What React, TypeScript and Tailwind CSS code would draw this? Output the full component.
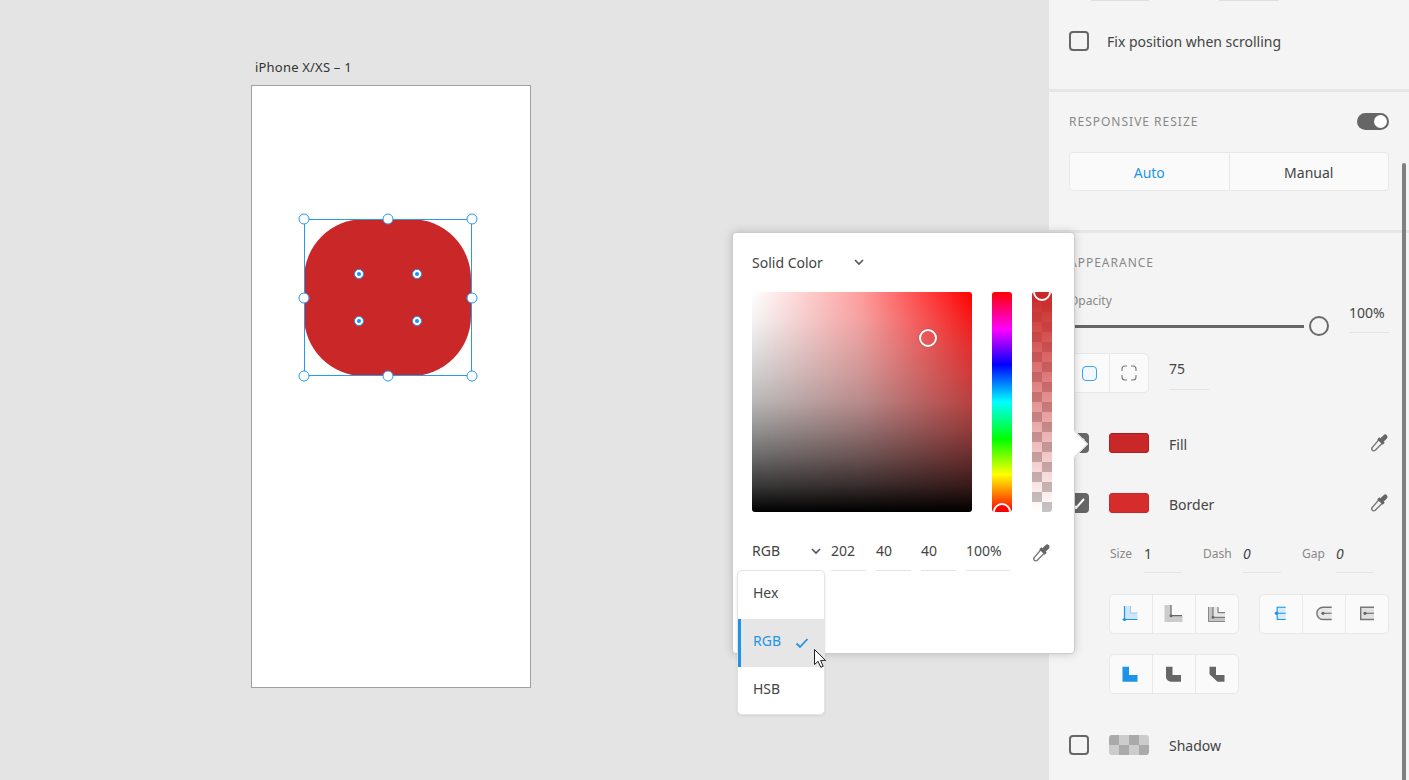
import React from "react";

const font = "[font-family:'Noto_Sans',sans-serif]";

function Dropper({ className = "" }: { className?: string }) {
  return (
    <svg viewBox="0 0 20 20" width="20" height="20" className={className} fill="none">
      <path d="M10 6.5l3.5 3.5-7 7c-.8.8-2.2 1.1-3.2.3-.8-1-.5-2.4.3-3.2z" stroke="#777" strokeWidth="1.4" />
      <path d="M9.3 5.3l5.4 5.4" stroke="#666" strokeWidth="3" />
      <path d="M13 7l3.2-3.2" stroke="#666" strokeWidth="4.6" strokeLinecap="round" />
    </svg>
  );
}

function Chevron({ className = "" }: { className?: string }) {
  return (
    <svg viewBox="0 0 12 12" width="12" height="12" className={className} fill="none">
      <path d="M2 4l4 4 4-4" stroke="#555" strokeWidth="1.6" />
    </svg>
  );
}

function Check({ on = false }: { on?: boolean }) {
  return (
    <div className={`flex h-5 w-5 shrink-0 items-center justify-center rounded-[4px] border-2 border-[#666] ${on ? "bg-[#666]" : ""}`}>
      {on && (
        <svg viewBox="0 0 16 16" width="16" height="16" fill="none">
          <path d="M2.5 10l2.5 3 8-9" stroke="#fff" strokeWidth="2" />
        </svg>
      )}
    </div>
  );
}

function Underlined({ value, className = "", italic = false }: { value: string; className?: string; italic?: boolean }) {
  return (
    <div className={`border-b border-[#e4e4e4] text-[14px] leading-[20px] text-[#444] ${italic ? "italic" : ""} ${className}`}>{value}</div>
  );
}

function Handle({ x, y }: { x: number; y: number }) {
  return (
    <div
      className="absolute h-[11px] w-[11px] -translate-x-1/2 -translate-y-1/2 rounded-full border-[1.5px] border-[#2a98ec] bg-white"
      style={{ left: x, top: y }}
    />
  );
}

function Radius({ x, y }: { x: number; y: number }) {
  return (
    <div
      className="absolute flex h-[10px] w-[10px] -translate-x-1/2 -translate-y-1/2 items-center justify-center rounded-full border-[1.5px] border-[#2a98ec] bg-white"
      style={{ left: x, top: y }}
    >
      <div className="h-1 w-1 rounded-full bg-[#1e94e8]" />
    </div>
  );
}

function Group({ children, className = "" }: { children: React.ReactNode; className?: string }) {
  return (
    <div className={`flex h-10 divide-x divide-[#e8e8e8] rounded-[5px] border border-[#e8e8e8] bg-[#fafafa] ${className}`}>{children}</div>
  );
}

function Cell({ children, className = "" }: { children: React.ReactNode; className?: string }) {
  return <div className={`flex flex-1 items-center justify-center ${className}`}>{children}</div>;
}

function Ico({ children }: { children: React.ReactNode }) {
  return (
    <svg viewBox="0 0 20 20" width="20" height="20" fill="none">
      {children}
    </svg>
  );
}

export default function App() {
  return (
    <div className={`relative flex h-[780px] w-[1409px] overflow-hidden bg-[#e4e4e4] ${font}`}>
      {/* Canvas */}
      <div className="relative flex-1">
        <div className="absolute left-[255px] top-[58px] text-[13px] leading-[18px] tracking-[0.2px] text-[#333]">iPhone X/XS – 1</div>
        <div className="absolute left-[251px] top-[85px] h-[603px] w-[280px] border border-[#a0a0a0] bg-white" />
        <div className="absolute left-[304px] top-[219px] h-[157px] w-[167px] rounded-[60px] bg-[#ca2828]" />
        <div className="absolute left-[304px] top-[219px] h-[157px] w-[168px] border border-[#2a98ec]" />
        <Handle x={304} y={219} />
        <Handle x={387.5} y={219} />
        <Handle x={471.5} y={219} />
        <Handle x={304} y={297.5} />
        <Handle x={471.5} y={297.5} />
        <Handle x={304} y={375.5} />
        <Handle x={387.5} y={375.5} />
        <Handle x={471.5} y={375.5} />
        <Radius x={359} y={274} />
        <Radius x={416.5} y={274} />
        <Radius x={359} y={320.5} />
        <Radius x={416.5} y={320.5} />
      </div>

      {/* Right panel */}
      <div className="relative flex w-[360px] shrink-0 flex-col bg-[#f4f4f4] text-[#444]">
        <div className="flex gap-[70px] pl-[42px]">
          <div className="h-px w-[58px] bg-[#e0e0e0]" />
          <div className="h-px w-[60px] bg-[#e0e0e0]" />
        </div>
        <div className="mt-[30px] flex h-5 items-center px-5">
          <Check />
          <span className="ml-[18px] text-[14px] text-[#444]">Fix position when scrolling</span>
        </div>
        <div className="mt-[38px] h-[3px] bg-[#e6e6e6]" />

        <div className="mt-[21px] flex h-[17px] items-center justify-between px-5">
          <span className="text-[12px] tracking-[1px] text-[#888]">RESPONSIVE RESIZE</span>
          <div className="flex h-[17px] w-8 items-center justify-end rounded-full bg-[#666] pr-[2px]">
            <div className="h-[13px] w-[13px] rounded-full bg-white" />
          </div>
        </div>
        <div className="mx-5 mt-[22px] flex h-[39px] divide-x divide-[#e8e8e8] rounded-[4px] border border-[#e8e8e8] bg-[#fafafa] text-[14px]">
          <Cell className="pt-[1px] text-[#1e94e8]">Auto</Cell>
          <Cell className="pt-[1px] text-[#444]">Manual</Cell>
        </div>
        <div className="mt-[39px] h-[3px] bg-[#e6e6e6]" />

        <div className="mt-[20px] flex h-[18px] items-center px-5 pt-[1px]">
          <span className="text-[12px] tracking-[1px] text-[#888]">APPEARANCE</span>
        </div>
        <div className="mt-[20px] flex px-5">
          <div className="flex-1">
            <div className="pt-[1px] text-[12px] leading-[17px] text-[#888]">Opacity</div>
            <div className="mt-[7px] flex h-5 items-center">
              <div className="h-[3px] w-[235px] bg-[#666]" />
              <div className="ml-[5px] h-5 w-5 rounded-full border-[2.5px] border-[#6a6a6a] bg-[#f4f4f4]" />
            </div>
          </div>
          <Underlined value="100%" className="mt-[12px] h-[30px] w-10 self-start" />
        </div>

        <div className="mt-[17px] flex items-start px-5">
          <Group className="w-20">
            <Cell>
              <div className="h-[15px] w-[15px] rounded-[4px] border-[1.5px] border-[#3aa0f0] bg-[#f2f9fe]" />
            </Cell>
            <Cell>
              <Ico>
                <path d="M3 8V6a3 3 0 0 1 3-3h2M12 3h2a3 3 0 0 1 3 3v2M17 12v2a3 3 0 0 1-3 3h-2M8 17H6a3 3 0 0 1-3-3v-2" stroke="#777" strokeWidth="1.1" />
              </Ico>
            </Cell>
          </Group>
          <Underlined value="75" className="ml-5 mt-[6px] h-[31px] w-10" />
        </div>

        <div className="mt-10 flex h-5 items-center px-5">
          <Check on />
          <div className="ml-5 h-5 w-10 rounded-[3px] border border-[#a82020] bg-[#ca2828]" />
          <span className="ml-5 flex-1 pt-[2px] text-[14px]">Fill</span>
          <Dropper />
        </div>
        <div className="mt-10 flex h-5 items-center px-5">
          <Check on />
          <div className="ml-5 h-5 w-10 rounded-[3px] border border-[#c42828] bg-[#d62c2c]" />
          <span className="ml-5 flex-1 pt-[2px] text-[14px]">Border</span>
          <Dropper />
        </div>

        <div className="mt-[30px] flex pl-[61px] text-[12px] leading-[20px] text-[#888]">
          <span className="w-[34px] pt-[1px]">Size</span>
          <Underlined value="1" className="h-[30px] w-[38px] pt-[1px]" />
          <span className="ml-[21px] w-[40px] pt-[1px]">Dash</span>
          <Underlined value="0" italic className="h-[30px] w-[38px] pt-[1px]" />
          <span className="ml-[21px] w-[34px] pt-[1px]">Gap</span>
          <Underlined value="0" italic className="h-[30px] w-[38px] pt-[1px]" />
        </div>

        <div className="mt-[21px] flex gap-5 pl-[60px] pr-5">
          <Group className="w-[130px]">
            <Cell>
              <Ico>
                <path d="M3.5 2h6v7h7v6.5H3.5z" fill="#cfe6f9" />
                <path d="M9.5 2v7h7" stroke="#9ccbf0" strokeWidth="1" />
                <path d="M3.5 2v14M1.5 15.5h15" stroke="#1e94e8" strokeWidth="1.2" />
                <circle cx="3.5" cy="15.5" r="1.6" fill="#1e94e8" />
              </Ico>
            </Cell>
            <Cell>
              <Ico>
                <path d="M.5 1H7v10.7h11.5V18H.5z" fill="#ccc" />
                <path d="M7 1v10.7h11" stroke="#666" strokeWidth="1.2" />
                <circle cx="7" cy="11.7" r="1.5" fill="#666" />
              </Ico>
            </Cell>
            <Cell>
              <Ico>
                <path d="M1 3h5v10.3h12V18H1z" fill="#c4c4c4" />
                <path d="M6 3h5v5.7h7v4.6H6z" fill="#e8e8e8" />
                <path d="M6 3v10.3h12M11 3v5.7h7" stroke="#666" strokeWidth="1" />
                <path d="M1.5 3v14.5H18" stroke="#888" strokeWidth="1" />
                <circle cx="6" cy="13.3" r="1.4" fill="#666" />
              </Ico>
            </Cell>
          </Group>
          <Group className="w-[130px]">
            <Cell>
              <Ico>
                <rect x="5.7" y="2.7" width="9" height="13.3" fill="#d6ebfb" />
                <path d="M14.7 3.2H6.2v12.3h8.5M5 9.3h9.7" stroke="#1e94e8" strokeWidth="1.1" />
                <circle cx="5.5" cy="9.3" r="1.7" fill="#1e94e8" />
              </Ico>
            </Cell>
            <Cell>
              <Ico>
                <path d="M17.7 3.2H9a6.1 6.1 0 0 0 0 12.3h8.7" stroke="#777" strokeWidth="1.4" fill="#e8e8e8" />
                <path d="M9 9.3h8.7" stroke="#777" strokeWidth="1.2" />
                <circle cx="9" cy="9.3" r="1.6" fill="#666" />
              </Ico>
            </Cell>
            <Cell>
              <Ico>
                <path d="M17 3.2H3.7v12.3H17" stroke="#777" strokeWidth="1.4" fill="#e0e0e0" />
                <path d="M8 9.3h9" stroke="#777" strokeWidth="1.2" />
                <circle cx="8" cy="9.3" r="1.6" fill="#666" />
              </Ico>
            </Cell>
          </Group>
        </div>

        <div className="mt-5 flex pl-[60px]">
          <Group className="w-[130px]">
            <Cell>
              <Ico>
                <path d="M1.5 2.7H8V11h8.5v6.7h-15z" fill="#1e94e8" />
              </Ico>
            </Cell>
            <Cell>
              <Ico>
                <path d="M2 2.7h6.5V11H17v6.7H7a5 5 0 0 1-5-5z" fill="#666" />
              </Ico>
            </Cell>
            <Cell>
              <Ico>
                <path d="M2.5 2.7H9V11h8.5v6.7H10.5l-8-7.5z" fill="#666" />
              </Ico>
            </Cell>
          </Group>
        </div>

        <div className="mt-[41px] flex h-5 items-center px-5">
          <Check />
          <div className="ml-5 grid h-5 w-10 grid-cols-4 grid-rows-2 overflow-hidden rounded-[3px]">
            <div className="bg-[#aaa]" />
            <div className="bg-[#ccc]" />
            <div className="bg-[#aaa]" />
            <div className="bg-[#ccc]" />
            <div className="bg-[#ccc]" />
            <div className="bg-[#aaa]" />
            <div className="bg-[#ccc]" />
            <div className="bg-[#aaa]" />
          </div>
          <span className="ml-5 text-[14px]">Shadow</span>
        </div>

        <div className="absolute left-[353px] top-[163px] h-[617px] w-1 rounded-t-full bg-[#808080]" />
      </div>

      {/* Colour popover */}
      <div className="absolute left-[732px] top-[232px] flex h-[422px] w-[343px] flex-col rounded-[4px] border border-[#ccc] bg-white pl-[19px] pr-[18px] pt-[18px] shadow-[0_0_10px_rgba(0,0,0,0.18)]">
        <div className="flex h-[22px] items-center text-[14px] text-[#444]">
          <span className="w-[100px]">Solid Color</span>
          <Chevron className="ml-[1px]" />
        </div>
        <div className="mt-[19px] flex gap-5">
          <div className="relative h-[220px] w-[220px] rounded-[3px] bg-[linear-gradient(to_bottom,rgba(179,179,179,0),rgba(179,179,179,0.14)_12.5%,rgba(155,155,155,0.29)_25%,rgba(139,139,139,0.41)_37.5%,rgba(121,121,121,0.53)_50%,rgba(89,89,89,0.65)_62.5%,rgba(58,58,58,0.757)_75%,rgba(30,30,30,0.875)_87.5%,#000),linear-gradient(to_right,#fff,#ff9c9c_50%,#f00)]">
            <div className="absolute left-[167px] top-[37px] h-[18px] w-[18px] rounded-full border-2 border-white shadow-[0_0_1px_#333]" />
          </div>
          <div className="relative h-[220px] w-5 overflow-hidden rounded-[3px] bg-[linear-gradient(to_bottom,#f00,#f0f_17%,#00f_33%,#0ff_50%,#0f0_67%,#ff0_83%,#f00)]">
            <div className="absolute left-[1px] top-[211px] h-[18px] w-[18px] rounded-full border-2 border-white bg-[#f00]" />
          </div>
          <div className="relative h-[220px] w-5 overflow-hidden rounded-[3px] [background:repeating-conic-gradient(#fff_0_25%,#c4c4c4_0_50%)_0_0/20px_20px]">
            <div className="absolute inset-0 bg-[linear-gradient(to_bottom,#ca2828,transparent)]" />
            <div className="absolute left-[1px] top-[-9px] h-[18px] w-[18px] rounded-full border-2 border-white bg-[#ca2828]" />
          </div>
        </div>
        <div className="mt-[28px] flex items-start text-[14px] text-[#444]">
          <span className="w-[58px] leading-[22px]">RGB</span>
          <Chevron className="mt-[5px]" />
          <Underlined value="202" className="ml-[9px] h-[31px] w-[35px] pt-[1px]" />
          <Underlined value="40" className="ml-[10px] h-[31px] w-[35px] pt-[1px]" />
          <Underlined value="40" className="ml-[10px] h-[31px] w-[35px] pt-[1px]" />
          <Underlined value="100%" className="ml-[10px] h-[31px] w-[44px] pt-[1px]" />
          <Dropper className="ml-[21px] mt-[3px]" />
        </div>
        {/* Arrow */}
        <div className="absolute right-[-10px] top-[201px] h-5 w-5 rotate-45 border-r border-t border-[#d8d8d8] bg-white" />
      </div>

      {/* Mode dropdown */}
      <div className="absolute left-[737px] top-[570px] flex h-[145px] w-[88px] flex-col rounded-[5px] border border-[#e4e4e4] bg-white text-[14px] text-[#444] shadow-[0_1px_3px_rgba(0,0,0,0.08)]">
        <div className="flex h-[48px] items-center pb-[6px] pl-[15px]">Hex</div>
        <div className="flex h-[48px] items-center border-l-[3px] border-[#1e94e8] bg-[#e6e6e6] pb-[6px] pl-[12px] text-[#1e94e8]">
          RGB
          <svg viewBox="0 0 14 14" width="14" height="14" className="ml-[14px] mt-[6px]" fill="none">
            <path d="M1.5 7.5l3.5 3.5 7.5-8" stroke="#1e94e8" strokeWidth="1.8" />
          </svg>
        </div>
        <div className="flex h-[47px] items-center pb-[4px] pl-[15px]">HSB</div>
      </div>

      {/* Pointer */}
      <svg className="absolute left-[813px] top-[648px]" viewBox="0 0 14 22" width="14" height="22">
        <path d="M1.5 1.5v15l3.6-3.2 2.7 6 2.4-1-2.6-5.9h4.9z" fill="#fff" stroke="#222" strokeWidth="1" />
      </svg>
    </div>
  );
}
